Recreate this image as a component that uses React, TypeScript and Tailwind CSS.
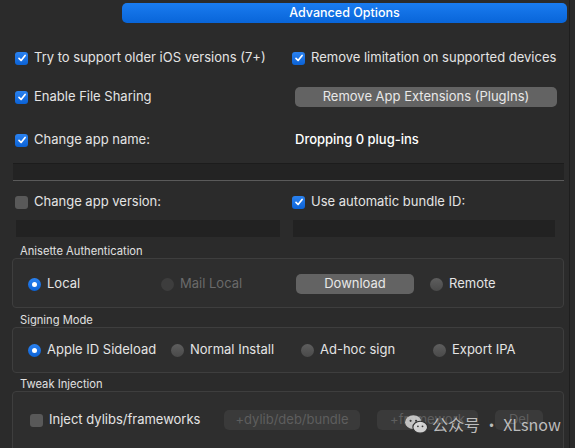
import React from "react";

function Check({ on, label }: { on?: boolean; label: string }) {
  return (
    <div className="flex items-center gap-[6px]">
      {on ? (
        <span className="w-[13px] h-[13px] rounded-[3px] bg-gradient-to-b from-[#2a82f0] to-[#0a62d6] flex items-center justify-center">
          <svg width="10" height="10" viewBox="0 0 10 10">
            <path d="M2 5.3 L4.1 7.5 L8.1 2.4" fill="none" stroke="white" strokeWidth="1.7" strokeLinecap="round" strokeLinejoin="round" />
          </svg>
        </span>
      ) : (
        <span className="w-[13px] h-[13px] rounded-[3px] bg-[#595959]" />
      )}
      <span className="text-[13px] text-[#e4e4e4]">{label}</span>
    </div>
  );
}

function Radio({ on, label, off }: { on?: boolean; label: string; off?: boolean }) {
  return (
    <div className="flex items-center gap-[6px]">
      {on ? (
        <span className="w-[13px] h-[13px] rounded-full bg-gradient-to-b from-[#2a82f0] to-[#0a62d6] flex items-center justify-center">
          <span className="w-[5px] h-[5px] rounded-full bg-white" />
        </span>
      ) : (
        <span className={`w-[13px] h-[13px] rounded-full ${off ? "bg-[#3d3d3d]" : "bg-gradient-to-b from-[#5e5e5e] to-[#4a4a4a]"}`} />
      )}
      <span className={`text-[13px] ${off ? "text-[#6a6a6a]" : "text-[#e4e4e4]"}`}>{label}</span>
    </div>
  );
}

function GroupLabel({ children }: { children: React.ReactNode }) {
  return <div className="pl-[20px] h-[14px] text-[11.2px] leading-[14px] text-[#e0e0e0]">{children}</div>;
}

function Button({ children, w, off }: { children: React.ReactNode; w: string; off?: boolean }) {
  return (
    <div
      className={`${w} h-[20px] rounded-[5px] text-[13px] flex items-center justify-center ${
        off ? "bg-[#3a3a3a] text-[#5e5e5e]" : "bg-[#636363] text-[#e8e8e8]"
      }`}
    >
      {children}
    </div>
  );
}

export default function App() {
  return (
    <div className="relative w-[575px] h-[448px] overflow-hidden bg-[#2b2b2b] font-['Inter','Liberation_Sans',sans-serif]">
      <div className="absolute right-[5px] top-0 bottom-0 w-px bg-[#1e1e1e]" />

      {/* header */}
      <div className="pt-[3px] pl-[122px] pr-[8px]">
        <div className="h-[20px] rounded-[5px] bg-gradient-to-b from-[#1a7cf0] to-[#0865d9] text-white text-[12.5px] font-medium flex items-center justify-center">
          Advanced Options
        </div>
      </div>

      {/* options */}
      <div className="pl-[15px] pr-[11px]">
        <div className="grid grid-cols-[277px_1fr] items-center h-[20px] mt-[25px]">
          <Check on label="Try to support older iOS versions (7+)" />
          <Check on label="Remove limitation on supported devices" />
        </div>
        <div className="grid grid-cols-[277px_1fr] items-center h-[20px] mt-[19px]">
          <Check on label="Enable File Sharing" />
          <div className="ml-[3px]">
            <Button w="w-[262px]">Remove App Extensions (PlugIns)</Button>
          </div>
        </div>
        <div className="grid grid-cols-[277px_1fr] items-center h-[20px] mt-[23px]">
          <Check on label="Change app name:" />
          <span className="ml-[3px] text-[13px] text-white font-medium">Dropping 0 plug-ins</span>
        </div>
        <div className="-ml-[2px] mt-[13px] h-[18px] w-[551px] bg-[#232323] border-t border-t-[#1c1c1c] border-b border-b-[#5a5a5a]" />
        <div className="grid grid-cols-[277px_1fr] items-center h-[20px] mt-[11px]">
          <Check label="Change app version:" />
          <Check on label="Use automatic bundle ID:" />
        </div>
        <div className="grid grid-cols-[277px_1fr] mt-[8px]">
          <div className="h-[17px] w-[264px] ml-[1px] bg-[#222222]" />
          <div className="h-[17px] w-[262px] ml-[1px] bg-[#222222]" />
        </div>
      </div>

      {/* Anisette */}
      <div className="mt-[7px]">
        <GroupLabel>Anisette Authentication</GroupLabel>
        <div className="ml-[12px] mr-[11px] h-[50px] rounded-[4px] border border-[#3e3e3e] bg-[#2e2e2e] flex items-center pl-[15px] pt-[2px]">
          <div className="w-[133px]"><Radio on label="Local" /></div>
          <div className="w-[135px]"><Radio off label="Mail Local" /></div>
          <Button w="w-[118px]">Download</Button>
          <div className="ml-[16px]"><Radio label="Remote" /></div>
        </div>
      </div>

      {/* Signing */}
      <div className="mt-[5px]">
        <GroupLabel>Signing Mode</GroupLabel>
        <div className="ml-[12px] mr-[11px] h-[46px] rounded-[4px] border border-[#3e3e3e] bg-[#2e2e2e] flex items-center pl-[15px]">
          <div className="w-[143px]"><Radio on label="Apple ID Sideload" /></div>
          <div className="w-[130px]"><Radio label="Normal Install" /></div>
          <div className="w-[132px]"><Radio label="Ad-hoc sign" /></div>
          <Radio label="Export IPA" />
        </div>
      </div>

      {/* Tweak */}
      <div className="mt-[4px]">
        <GroupLabel>Tweak Injection</GroupLabel>
        <div className="ml-[12px] mr-[11px] h-[70px] rounded-[4px] border border-[#3e3e3e] bg-[#2e2e2e] flex items-start pt-[18px] pl-[17px]">
          <div className="w-[194px] h-[20px] flex items-center"><Check label="Inject dylibs/frameworks" /></div>
          <Button off w="w-[136px]">+dylib/deb/bundle</Button>
          <div className="ml-[17px]"><Button off w="w-[101px]">+framework</Button></div>
          <div className="ml-[17px]"><Button off w="w-[48px]">Del</Button></div>
        </div>
      </div>

      {/* watermark */}
      <div className="absolute left-[404px] top-[412px] flex items-center gap-[2px]">
        <svg width="26" height="22" viewBox="0 0 28 24">
          <ellipse cx="10" cy="10" rx="9" ry="7.5" fill="#d8d8d8" fillOpacity="0.85" />
          <ellipse cx="17.5" cy="15.5" rx="8" ry="6.5" fill="#d8d8d8" fillOpacity="0.95" stroke="#2e2e2e" strokeWidth="1.2" />
          <circle cx="7" cy="8.5" r="1.2" fill="#3a3a3a" />
          <circle cx="13" cy="8.5" r="1.2" fill="#3a3a3a" />
          <circle cx="15" cy="14.5" r="1" fill="#3a3a3a" />
          <circle cx="20" cy="14.5" r="1" fill="#3a3a3a" />
        </svg>
        <span className="text-[16px] font-['Noto_Sans_CJK_SC','Inter',sans-serif] text-[#d6d6d6]/85">
          公众号 · XLsnow
        </span>
      </div>
    </div>
  );
}
